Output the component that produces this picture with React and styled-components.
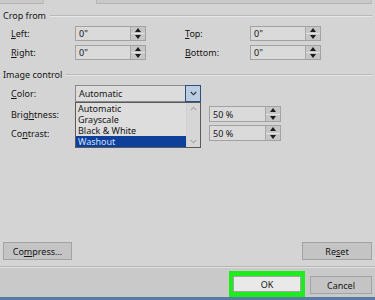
import React from "react";
import styled, { createGlobalStyle } from "styled-components";

const Global = createGlobalStyle`
  html, body { margin: 0; padding: 0; background: #d4d4d4; }
  body { font-family: "Noto Sans", "Open Sans", sans-serif; font-size: 9px; color: #151515; }
  u { text-decoration: underline; text-underline-offset: 1px; }
`;

const Page = styled.div`
  width: 375px;
  height: 300px;
  display: flex;
  flex-direction: column;
  background: #d4d4d4;
  overflow: hidden;
`;

const TopStrip = styled.div`
  height: 4px;
  display: flex;
  gap: 52px;
  padding-right: 3px;
`;

const StripPiece = styled.div`
  width: ${(p) => p.$w || "auto"};
  flex: ${(p) => (p.$grow ? 1 : "none")};
  height: 3px;
  background: #c9c9c9;
  border-bottom: 1px solid #b4b4b4;
  border-left: ${(p) => (p.$grow ? "1px solid #b8b8b8" : "none")};
  border-right: 1px solid #bcbcbc;
`;

const Body = styled.div`
  flex: 1;
  display: flex;
  flex-direction: column;
  padding: 0 3px;
`;

const SectionHeader = styled.div`
  display: flex;
  align-items: center;
  gap: 4px;
  height: 11px;
  margin-top: ${(p) => p.$mt}px;
  white-space: nowrap;
`;

const SectionLine = styled.div`
  flex: 1;
  height: 0;
  border-top: 1px solid #b9b9b9;
  border-bottom: 1px solid #e6e6e6;
`;

const CropGrid = styled.div`
  display: grid;
  grid-template-columns: 64px 71px 39px 65px 71px;
  grid-auto-rows: 15px;
  row-gap: 4px;
  padding-left: 8px;
  margin-top: 5px;
  align-items: center;
`;

const Label = styled.span`
  white-space: nowrap;
`;

const SpinBox = styled.div`
  display: flex;
  height: ${(p) => p.$h || 15}px;
  width: ${(p) => p.$w || 71}px;
  box-sizing: border-box;
  border: 1px solid #a2a2a2;
  background: #dadada;
`;

const SpinText = styled.div`
  flex: 1;
  display: flex;
  align-items: center;
  padding-left: 3px;
`;

const SpinButtons = styled.div`
  width: 14px;
  display: flex;
  flex-direction: column;
  border-left: 1px solid #a8a8a8;
  background: #c6c6c6;
`;

const SpinHalf = styled.div`
  flex: 1;
  display: flex;
  align-items: center;
  justify-content: center;
  & + & { border-top: 1px solid #e4e4e4; }
`;

const Tri = ({ down }) => (
  <svg width="6" height="4" viewBox="0 0 6 4">
    <path d={down ? "M0 0H6L3 4Z" : "M0 4H6L3 0Z"} fill="#1c1c1c" />
  </svg>
);

const Spinner = ({ value, w, h }) => (
  <SpinBox $w={w} $h={h}>
    <SpinText>{value}</SpinText>
    <SpinButtons>
      <SpinHalf><Tri /></SpinHalf>
      <SpinHalf><Tri down /></SpinHalf>
    </SpinButtons>
  </SpinBox>
);

const ControlRow = styled.div`
  display: flex;
  align-items: center;
  height: ${(p) => p.$h}px;
  margin-top: ${(p) => p.$mt}px;
  padding-left: 8px;
`;

const RowLabel = styled.span`
  width: 64px;
  white-space: nowrap;
`;

const SliderGap = styled.div`
  width: 134px;
`;

const ComboWrap = styled.div`
  position: relative;
  width: 126px;
  height: 17px;
`;

const ComboField = styled.div`
  display: flex;
  height: 100%;
  box-sizing: border-box;
  border: 1px solid #8c8c8c;
  background: #dcdcdc;
`;

const ComboText = styled.div`
  flex: 1;
  display: flex;
  align-items: center;
  padding-left: 3px;
`;

const ComboButton = styled.div`
  width: 14px;
  margin: -1px -1px -1px 0;
  border: 1px solid #2d4f7c;
  background: #bccde2;
  display: flex;
  align-items: center;
  justify-content: center;
`;

const DropList = styled.div`
  position: absolute;
  top: 100%;
  left: 0;
  width: 126px;
  height: 46px;
  box-sizing: border-box;
  border: 1px solid #5a5a5a;
  background: #dddddd;
  display: flex;
  z-index: 2;
`;

const ListItems = styled.div`
  flex: 1;
  display: flex;
  flex-direction: column;
`;

const ListItem = styled.div`
  height: 11px;
  line-height: 11px;
  padding-left: 2px;
  background: ${(p) => (p.$sel ? "#0e3f9b" : "transparent")};
  color: ${(p) => (p.$sel ? "#cfe0ff" : "#151515")};
`;

const ScrollBar = styled.div`
  width: 13px;
  border-left: 1px solid #cfcfcf;
  background: #d6d6d6;
  display: flex;
  flex-direction: column;
  justify-content: space-between;
  align-items: center;
  padding: 3px 0;
`;

const Chevron = ({ dir, color = "#1f2f44", w = 7 }) => (
  <svg width={w} height="5" viewBox="0 0 7 5">
    <path
      d={dir === "up" ? "M0.8 4.2L3.5 1.4L6.2 4.2" : "M0.8 1L3.5 3.8L6.2 1"}
      fill="none"
      stroke={color}
      strokeWidth="1.1"
    />
  </svg>
);

const Spacer = styled.div`
  flex: 1;
`;

const ButtonRow = styled.div`
  display: flex;
  justify-content: space-between;
  height: 18px;
  margin-bottom: 6px;
`;

const Button = styled.div`
  width: ${(p) => p.$w}px;
  height: ${(p) => p.$h || 18}px;
  box-sizing: border-box;
  border: 1px solid #a3a3a3;
  background: ${(p) => p.$bg || "#c4c4c4"};
  display: flex;
  align-items: center;
  justify-content: center;
  white-space: nowrap;
`;

const Footer = styled.div`
  height: 30px;
  border-top: 1px solid #b5b5b5;
  box-shadow: inset 0 1px 0 #e0e0e0;
  background: #c9c9c9;
  display: flex;
  justify-content: flex-end;
  align-items: flex-end;
  gap: 5px;
  padding-right: 3px;
`;

const Highlight = styled.div`
  width: 76px;
  height: 26px;
  box-sizing: border-box;
  background: #1fec1f;
  padding: 5px 4px 5px 4px;
  display: flex;
`;

const CancelSlot = styled.div`
  padding-bottom: 3px;
`;

const BottomLine = styled.div`
  height: 3px;
  background: #587ba5;
`;

export default function App() {
  return (
    <Page>
      <Global />
      <TopStrip>
        <StripPiece $w="43px" />
        <StripPiece $grow />
      </TopStrip>
      <Body>
        <SectionHeader $mt={6}>
          <span>Crop from</span>
          <SectionLine />
        </SectionHeader>
        <CropGrid>
          <Label><u>L</u>eft:</Label>
          <Spinner value='0"' />
          <span />
          <Label><u>T</u>op:</Label>
          <Spinner value='0"' />
          <Label><u>R</u>ight:</Label>
          <Spinner value='0"' />
          <span />
          <Label><u>B</u>ottom:</Label>
          <Spinner value='0"' />
        </CropGrid>
        <SectionHeader $mt={9}>
          <span>Image control</span>
          <SectionLine />
        </SectionHeader>
        <ControlRow $h={17} $mt={5}>
          <RowLabel><u>C</u>olor:</RowLabel>
          <ComboWrap>
            <ComboField>
              <ComboText>Automatic</ComboText>
              <ComboButton><Chevron dir="down" /></ComboButton>
            </ComboField>
            <DropList>
              <ListItems>
                <ListItem>Automatic</ListItem>
                <ListItem>Grayscale</ListItem>
                <ListItem>Black &amp; White</ListItem>
                <ListItem $sel>Washout</ListItem>
              </ListItems>
              <ScrollBar>
                <Chevron dir="up" color="#a9a9a9" />
                <Chevron dir="down" color="#a9a9a9" />
              </ScrollBar>
            </DropList>
          </ComboWrap>
        </ControlRow>
        <ControlRow $h={16} $mt={4}>
          <RowLabel>Brig<u>h</u>tness:</RowLabel>
          <SliderGap />
          <Spinner value="50 %" w={72} h={16} />
        </ControlRow>
        <ControlRow $h={16} $mt={3}>
          <RowLabel>Co<u>n</u>trast:</RowLabel>
          <SliderGap />
          <Spinner value="50 %" w={72} h={16} />
        </ControlRow>
        <Spacer />
        <ButtonRow>
          <Button $w={69}>Co<u>m</u>press...</Button>
          <Button $w={70}>Re<u>s</u>et</Button>
        </ButtonRow>
      </Body>
      <Footer>
        <Highlight>
          <Button $w={68} $h={16} $bg="#e9e9e9">OK</Button>
        </Highlight>
        <CancelSlot>
          <Button $w={62} $h={18}>Cancel</Button>
        </CancelSlot>
      </Footer>
      <BottomLine />
    </Page>
  );
}
